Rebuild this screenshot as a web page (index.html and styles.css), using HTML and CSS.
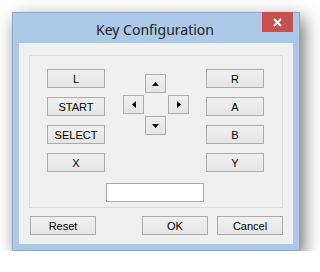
FILE: index.html
```html
<!DOCTYPE html>
<html lang="en">
<head>
    <meta charset="UTF-8">
    <title>Key Configuration</title>
    <link rel="stylesheet" href="styles.css">
</head>
<body>
    <div class="window">
        <div class="titlebar">
            <span class="title">Key Configuration</span>
            <button class="close" title="Close">
                <svg width="9" height="9" viewBox="0 0 9 9"><path d="M1 1 L8 8 M8 1 L1 8" stroke="#fff" stroke-width="2" fill="none"/></svg>
            </button>
        </div>
        <div class="client">
            <div class="group">
                <div class="keys">
                    <div class="col">
                        <button class="btn key">L</button>
                        <button class="btn key">START</button>
                        <button class="btn key">SELECT</button>
                        <button class="btn key">X</button>
                    </div>
                    <div class="dpad">
                        <button class="btn arrow up"><svg width="7" height="4" viewBox="0 0 7 4"><path d="M3.5 0 L7 4 L0 4 Z"/></svg></button>
                        <button class="btn arrow left"><svg width="4" height="7" viewBox="0 0 4 7"><path d="M0 3.5 L4 0 L4 7 Z"/></svg></button>
                        <button class="btn arrow right"><svg width="4" height="7" viewBox="0 0 4 7"><path d="M4 3.5 L0 0 L0 7 Z"/></svg></button>
                        <button class="btn arrow down"><svg width="7" height="4" viewBox="0 0 7 4"><path d="M0 0 L7 0 L3.5 4 Z"/></svg></button>
                    </div>
                    <div class="col">
                        <button class="btn key">R</button>
                        <button class="btn key">A</button>
                        <button class="btn key">B</button>
                        <button class="btn key">Y</button>
                    </div>
                </div>
                <input type="text" class="keyfield">
            </div>
            <div class="actions">
                <button class="btn wide">Reset</button>
                <div class="confirm">
                    <button class="btn wide">OK</button>
                    <button class="btn wide">Cancel</button>
                </div>
            </div>
        </div>
    </div>
</body>
</html>
```

FILE: styles.css
```css
body {
    margin: 0;
    background-color: #fff;
    font-family: 'Liberation Sans', Arial, sans-serif;
}
.window {
    position: relative;
    box-sizing: border-box;
    width: 288px;
    height: 239px;
    margin: 12px 0 0 12px;
    padding: 0 6px 6px;
    background-color: #adc9e8;
    border: 1px solid #8ea8c8;
    box-shadow: 4px 6px 16px rgba(0, 0, 0, 0.55);
}
.titlebar {
    height: 30px;
    display: flex;
    align-items: center;
    justify-content: center;
}
.title {
    font-family: 'Noto Sans', 'Open Sans', sans-serif;
    font-size: 14px;
    color: #222;
    margin-top: 2px;
    margin-left: -2px;
}
.close {
    position: absolute;
    top: -1px;
    right: 6px;
    width: 31px;
    height: 20px;
    padding: 0;
    border: none;
    background-color: #c75050;
    display: flex;
    align-items: center;
    justify-content: center;
}
.client {
    box-sizing: border-box;
    height: 201px;
    padding: 12px 10px 0 10px;
    background-color: #f0f0f0;
}
.group {
    box-sizing: border-box;
    height: 153px;
    border: 1px solid #dcdcdc;
    padding: 13px 18px 0 17px;
    display: flex;
    flex-direction: column;
}
.keys {
    display: flex;
    justify-content: space-between;
    align-items: flex-start;
}
.col {
    display: flex;
    flex-direction: column;
    gap: 9px;
}
.btn {
    box-sizing: border-box;
    padding: 0;
    border: 1px solid #adadad;
    background: linear-gradient(#f0f0f0, #e5e5e5);
    font-family: 'Liberation Sans', Arial, sans-serif;
    font-size: 11px;
    color: #000;
    height: 19px;
}
.key {
    width: 58px;
}
.dpad {
    margin-top: 5px;
    display: grid;
    grid-template-columns: 21px 21px 21px;
    grid-template-rows: 19px 19px 19px;
    column-gap: 1px;
    row-gap: 2px;
}
.arrow {
    width: 21px;
    display: flex;
    align-items: center;
    justify-content: center;
}
.up { grid-column: 2; grid-row: 1; }
.left { grid-column: 1; grid-row: 2; }
.right { grid-column: 3; grid-row: 2; margin-left: 1px; }
.down { grid-column: 2; grid-row: 3; }
.keyfield {
    align-self: center;
    box-sizing: border-box;
    width: 98px;
    height: 19px;
    margin-top: 11px;
    margin-left: -2px;
    border: 1px solid #ababab;
    background-color: #fff;
    padding: 0 3px;
}
.actions {
    display: flex;
    justify-content: space-between;
    margin-top: 8px;
    padding-left: 1px;
    padding-right: 0;
}
.confirm {
    display: flex;
    gap: 9px;
}
.wide {
    width: 66px;
}
```
